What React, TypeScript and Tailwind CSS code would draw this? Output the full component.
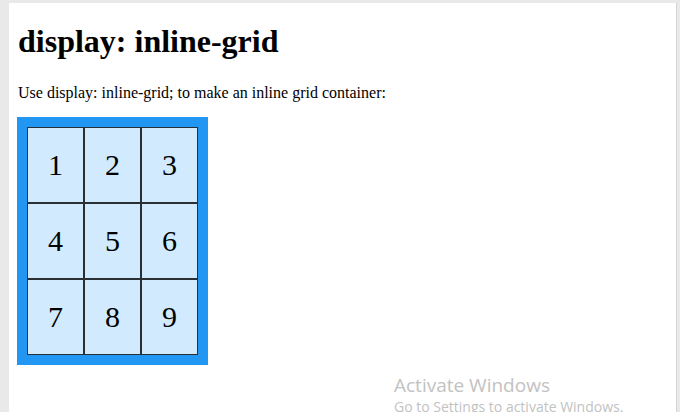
import React from "react";

const cells = ["1", "2", "3", "4", "5", "6", "7", "8", "9"];

export default function App() {
  return (
    <div className="relative h-[412px] w-[680px] overflow-hidden bg-[#e9e9e9] pl-[9px] pr-[3px] pt-[3px]">
      <div className="h-full border-r border-[#d4d4d4] bg-white pl-[9px] pt-[20px] text-black [font-family:'Liberation_Serif',serif]">
        <h1 className="text-[32px] font-bold leading-[37px]">display: inline-grid</h1>
        <p className="mt-[24px] text-[16px] leading-[18px]">
          Use display: inline-grid; to make an inline grid container:
        </p>

        <div className="mt-[15px] -ml-px inline-grid grid-cols-3 bg-[#2196f3] p-[10px]">
          {cells.map((c) => (
            <div
              key={c}
              className="border border-[rgba(0,0,0,0.8)] bg-[rgba(255,255,255,0.8)] px-[20px] py-[20px] text-center text-[30px] leading-[34px]"
            >
              {c}
            </div>
          ))}
        </div>
      </div>

      {/* windows watermark */}
      <div className="absolute left-[394px] top-[373px] text-[#c2c2c2] [font-family:'Open_Sans',sans-serif]">
        <div className="text-[19px] leading-[25px]">Activate Windows</div>
        <div className="text-[14px] leading-[18px]">Go to Settings to activate Windows.</div>
      </div>
    </div>
  );
}
